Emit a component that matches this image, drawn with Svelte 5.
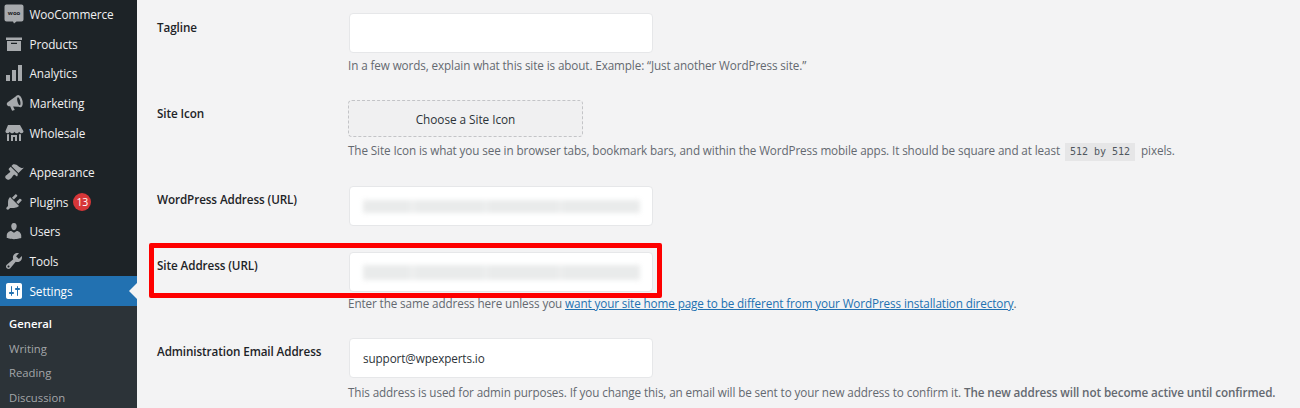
<script>
  const top = [
    { label: 'WooCommerce', icon: 'woo' },
    { label: 'Products', d: 'M18 3.500v2.600H2V3.500h16zM3 7h14v10H3V7zm10 3V8.700H7V10h6z' },
    { label: 'Analytics', d: 'M18 18V2h-4v16h4zm-6 0V7H8v11h4zm-6 0v-6H2v6h4z' },
    { label: 'Marketing', tilt: true, d: 'M15.500 2.500c-.8 0-1.500.4-2.100 1L3.500 7.300C2.600 7.700 2 8.500 2 9.500s.6 1.800 1.500 2.200l1.500.6.9 5.200h3l-.8-4.200 5.800 1.700c.6.600 1.300 1 2.100 1 2 0 3.500-3 3.500-6.750s-1.500-6.750-3.500-6.750zm0 2.200c.8 0 1.500 2 1.500 4.550s-.7 4.550-1.500 4.550-1.500-2-1.500-4.550.7-4.550 1.500-4.550z' },
    { label: 'Wholesale', d: 'M4 2h12l3.500 6.200c0 1.200-1 2-2.100 2-1 0-1.900-.6-2.300-1.500-.3.9-1.200 1.500-2.300 1.500s-2-.6-2.300-1.500c-.3.9-1.200 1.500-2.400 1.500s-2-.6-2.300-1.500c-.4.9-1.300 1.500-2.300 1.500-1.100 0-2.100-.8-2.100-2L4 2zm-1 9.300c.7.100 1.500 0 2-.3v7H3v-6.700zM7 12h6v6h-2v-4H9v4H7v-6zm8-1c.5.3 1.300.4 2 .3V18h-2v-7z' },
  ];
  const mid = [
    { label: 'Appearance', d: 'M14.480 11.060L7.410 3.990l1.500-1.500c.5-.56 2.300-.47 3.510.32 1.210.8 1.430 1.280 2.910 2.100 1.180.64 2.450 1.260 4.450.85zm-.71.71L6.700 4.700 4.930 6.470c-.39.39-.39 1.020 0 1.410l1.060 1.060c.39.39.39 1.030 0 1.420-.6.6-1.430 1.110-2.210 1.690-.35.26-.7.53-1.010.84C1.430 13.230.5 15.210 2.150 16.850c1.650 1.650 3.620.72 4.960-.62.31-.31.58-.66.84-1.010.58-.78 1.090-1.610 1.690-2.210.39-.39 1.030-.39 1.420 0l1.060 1.060c.39.39 1.020.39 1.410 0z' },
    { label: 'Plugins', badge: 13, d: 'M13.110 4.360L9.870 7.600 8 5.730l3.240-3.240c.35-.34 1.050-.2 1.560.32.52.51.66 1.210.31 1.550zm-8 1.770l.91-1.120 9.010 9.010-1.190.84c-.71.71-2.630 1.160-3.820 1.160H6.140L4.900 17.260c-.59.59-1.540.59-2.120 0-.59-.58-.59-1.530 0-2.120l1.240-1.240v-3.880c0-1.130.4-3.190 1.090-3.890zm7.260 3.970l3.240-3.240c.34-.35 1.040-.21 1.550.31.52.51.66 1.210.31 1.550l-3.240 3.250z' },
    { label: 'Users', d: 'M10 9.250c-2.270 0-2.730-3.440-2.730-3.440C7 4.020 7.820 2 9.970 2c2.160 0 2.980 2.020 2.710 3.810 0 0-.41 3.440-2.680 3.440zm0 2.570L12.720 10c2.390 0 4.520 2.330 4.520 4.530v2.490s-3.650 1.130-7.240 1.130c-3.650 0-7.240-1.130-7.240-1.130v-2.490c0-2.250 1.940-4.480 4.470-4.480z' },
    { label: 'Tools', d: 'M16.680 9.770c-1.340 1.340-3.300 1.670-4.950.99l-5.410 6.520c-.99.99-2.590.99-3.580 0s-.99-2.590 0-3.570l6.520-5.420c-.68-1.650-.35-3.610.99-4.950 1.280-1.280 3.120-1.620 4.720-1.060l-2.890 2.890 2.820 2.820 2.860-2.870c.53 1.580.18 3.390-1.080 4.650zM3.810 16.210c.4.39 1.040.39 1.430 0 .4-.4.4-1.040 0-1.430-.39-.4-1.030-.4-1.430 0-.39.39-.39 1.030 0 1.430z' },
  ];
  const settings = 'M18 16V4c0-1.100-.9-2-2-2H4c-1.100 0-2 .9-2 2v12c0 1.100.9 2 2 2h12c1.100 0 2-.9 2-2zM8 11h1c.55 0 1 .45 1 1s-.45 1-1 1H8v1.500c0 .28-.22.5-.5.5s-.5-.22-.5-.5V13H6c-.55 0-1-.45-1-1s.45-1 1-1h1V5.500c0-.28.22-.5.5-.5s.5.22.5.5V11zm5-2h-1c-.55 0-1-.45-1-1s.45-1 1-1h1V5.500c0-.28.22-.5.5-.5s.5.22.5.5V7h1c.55 0 1 .45 1 1s-.45 1-1 1h-1v5.500c0 .28-.22.5-.5.5s-.5-.22-.5-.5V9z';
  const sub = ['General', 'Writing', 'Reading', 'Discussion'];
</script>

{#snippet item(m)}
  <div class="item">
    {#if m.icon === 'woo'}
      <svg class="icon" viewBox="0 0 20 20">
        <path class="glyph" d="M2.500 .5h15a2 2 0 0 1 2 2v13a2 2 0 0 1-2 2h-5l-2.500 2-1-2h-6.500a2 2 0 0 1-2-2v-13a2 2 0 0 1 2-2z" />
        <text x="10" y="11" class="wootext">woo</text>
      </svg>
    {:else}
      <svg class="icon" viewBox="0 0 20 20"><path class="glyph" class:tilt={m.tilt} d={m.d} /></svg>
    {/if}
    <span>{m.label}</span>
    {#if m.badge}<span class="badge">{m.badge}</span>{/if}
  </div>
{/snippet}

<div class="page">
  <aside class="side">
    <nav class="group first">
      {#each top as m}{@render item(m)}{/each}
    </nav>
    <nav class="group second">
      {#each mid as m}{@render item(m)}{/each}
    </nav>
    <div class="item current">
      <svg class="icon" viewBox="0 0 20 20"><path class="white" d={settings} /></svg>
      <span>Settings</span>
      <i class="arrow"></i>
    </div>
    <ul class="submenu">
      {#each sub as s, i}
        <li class:on={i === 0}>{s}</li>
      {/each}
    </ul>
  </aside>

  <main class="main">
    <section class="row tagline">
      <div class="label">Tagline</div>
      <div class="field">
        <div class="input"></div>
        <p class="desc">In a few words, explain what this site is about. Example: “Just another WordPress site.”</p>
      </div>
    </section>

    <section class="row icon-row">
      <div class="label">Site Icon</div>
      <div class="field">
        <button class="choose">Choose a Site Icon</button>
        <p class="desc">The Site Icon is what you see in browser tabs, bookmark bars, and within the WordPress mobile apps. It should be square and at least <code>512 by 512</code> pixels.</p>
      </div>
    </section>

    <section class="row wp-row">
      <div class="label">WordPress Address (URL)</div>
      <div class="field">
        <div class="input"><div class="smear"></div></div>
      </div>
    </section>

    <section class="row site-row">
      <div class="label">Site Address (URL)</div>
      <div class="field">
        <div class="input"><div class="smear"></div></div>
        <p class="desc">Enter the same address here unless you <a href="#top">want your site home page to be different from your WordPress installation directory</a>.</p>
      </div>
      <div class="redbox"></div>
    </section>

    <section class="row mail-row">
      <div class="label">Administration Email Address</div>
      <div class="field">
        <div class="input mail">support@wpexperts.io</div>
        <p class="desc">This address is used for admin purposes. If you change this, an email will be sent to your new address to confirm it. <b>The new address will not become active until confirmed.</b></p>
      </div>
    </section>
  </main>
</div>

<style>
  :global(body) { margin: 0; background: #f3f3f4; }
  .page {
    display: flex;
    width: 1300px;
    height: 408px;
    overflow: hidden;
    font-family: "Open Sans", "Noto Sans", sans-serif;
    font-size: 12px;
    color: #2c3338;
  }
  .side {
    flex: 0 0 137px;
    background: #1d2327;
    color: #f0f0f1;
    font-size: 11.800px;
    letter-spacing: -0.1px;
  }
  .group.first { margin-top: -0.900px; }
  .group.second { margin-top: 9.700px; }
  .item {
    position: relative;
    display: flex;
    align-items: center;
    height: 29.700px;
    padding-left: 4px;
  }
  .icon { width: 20px; height: 20px; margin-right: 5.500px; flex: none; }
  .glyph { fill: #a7aaad; }
  .tilt { transform-box: fill-box; transform-origin: center; transform: rotate(-14deg) scale(.92); }
  .white { fill: #fff; }
  .wootext {
    font-size: 6px;
    font-weight: 700;
    text-anchor: middle;
    fill: #1d2327;
    font-family: "Open Sans", sans-serif;
  }
  .badge {
    margin-left: 5px;
    min-width: 18px;
    height: 18px;
    line-height: 18px;
    border-radius: 9px;
    background: #d63638;
    color: #fff;
    font-size: 10.500px;
    text-align: center;
  }
  .current { background: #2271b1; color: #fff; }
  .arrow {
    position: absolute;
    right: 0;
    top: 7px;
    width: 0;
    height: 0;
    border: 8px solid transparent;
    border-right-color: #f3f3f4;
    border-left-width: 0;
  }
  .submenu {
    list-style: none;
    margin: 0;
    padding: 6.800px 0 0;
    background: #2c3338;
    height: 110px;
    font-size: 11.300px;
    letter-spacing: 0;
    color: #c3c4c7cc;
  }
  .submenu li { height: 24.400px; line-height: 24.400px; padding-left: 9px; }
  .submenu li.on { color: #fff; font-weight: 600; }

  .main { flex: 1; min-width: 0; padding-left: 20px; }
  .row { position: relative; display: flex; }
  .label {
    flex: 0 0 191px;
    font-weight: 600;
    font-size: 11.700px;
    letter-spacing: -0.1px;
    line-height: 17px;
    color: #1d2327;
    white-space: nowrap;
  }
  .field { flex: 1; min-width: 0; }
  .input {
    box-sizing: border-box;
    display: flex;
    align-items: center;
    width: 304px;
    height: 40px;
    margin-left: 1px;
    background: #fff;
    border: 1px solid #e6e7e9;
    border-radius: 4px;
  }
  .desc {
    margin: 0;
    font-size: 11.700px;
    letter-spacing: -0.105px;
    line-height: 18px;
    color: #646970;
    white-space: nowrap;
  }
  .tagline { padding-top: 13px; height: 100px; box-sizing: border-box; }
  .tagline .label { padding-top: 6px; }
  .tagline .desc { margin-top: 3px; }
  .icon-row { height: 86px; }
  .icon-row .label { padding-top: 5px; }
  .icon-row .desc { margin-top: 4px; }
  .choose {
    display: block;
    box-sizing: border-box;
    width: 235px;
    height: 37px;
    border: 1px dashed #c3c4c7;
    border-radius: 4px;
    background: #f0f0f1;
    color: #2c3338;
    font: inherit;
    font-size: 11.800px;
    letter-spacing: -0.05px;
    padding: 1px 0 0;
  }
  code {
    font-family: "DejaVu Sans Mono", "Liberation Mono", monospace;
    font-size: 10px;
    letter-spacing: 0;
    background: #e6e6e7;
    color: #50575e;
    padding: 3px 5px 4px;
    margin: 0 3px 0 2px;
  }
  .wp-row { height: 66px; }
  .wp-row .label { padding-top: 5px; }
  .site-row { height: 86px; }
  .site-row .label { padding-top: 5px; }
  .site-row .desc { margin-top: 2px; }
  .smear {
    width: 277px;
    height: 13px;
    margin-left: 13px;
    background: linear-gradient(90deg, #e9ebeb 0 16%, #eff0f0 18%, #e9ebeb 20% 43%, #eff0f0 44%, #e9ebeb 46% 70%, #eeefef 71%, #e9ebeb 73%);
    filter: blur(2.500px);
  }
  .site-row .smear { height: 15px; }
  .redbox {
    position: absolute;
    left: -8px;
    top: -9px;
    box-sizing: border-box;
    width: 513px;
    height: 55px;
    border: 5px solid #fe0000;
    border-radius: 2px;
  }
  .mail-row .label { padding-top: 5px; }
  .mail { padding-left: 13px; font-size: 11.700px; letter-spacing: -0.1px; color: #2c3338; }
  .mail-row .desc { margin-top: 5px; }
  a { color: #2271b1; text-decoration: underline; }
  b { font-weight: 600; }
</style>
